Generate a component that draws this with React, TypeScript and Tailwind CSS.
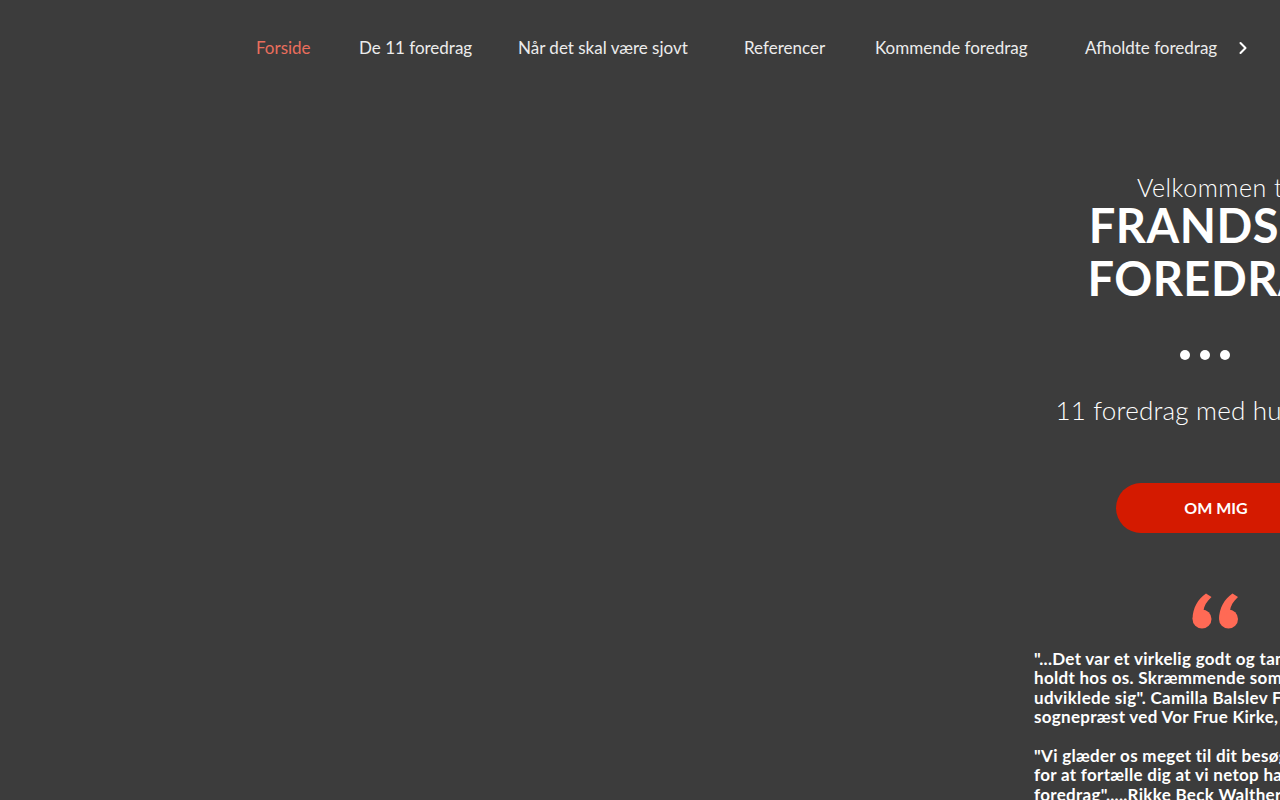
import { ChevronRight } from "lucide-react";

interface NavItem {
  text: string;
  width: string;
  active?: boolean;
}

const NavItems: NavItem[] = [
  { text: "Forside", width: "w-[103px]", active: true },
  { text: "De 11 foredrag", width: "w-[159px]" },
  { text: "Når det skal være sjovt", width: "w-[226px]" },
  { text: "Referencer", width: "w-[131px]" },
  { text: "Kommende foredrag", width: "w-[210px]" },
  { text: "Afholdte foredrag", width: "w-[148px]" },
];

const quoteLines = [
  "\"...Det var et virkelig godt og tankevækkende foredrag du",
  "holdt hos os. Skræmmende som samfundet",
  "udviklede sig\". Camilla Balslev Frederiksen,",
  "sognepræst ved Vor Frue Kirke, Aarhus",
];

const quoteLines2 = [
  "\"Vi glæder os meget til dit besøg og skriver",
  "for at fortælle dig at vi netop har booket dit",
  "foredrag\".....Rikke Beck Walther, Sognepræst",
];

function QuoteMark() {
  return (
    <svg width="48" height="36" viewBox="0 0 48 36" fill="#ff6a55">
      <circle cx="10" cy="26" r="9.5" />
      <path d="M0.6 26 C0.6 15 6 6 14 0.5 L19.5 4 C14.5 8.5 12 13 11.5 17.5 Z" />
      <circle cx="36.5" cy="26" r="9.5" />
      <path d="M27.1 26 C27.1 15 32.5 6 40.5 0.5 L46 4 C41 8.5 38.5 13 38 17.5 Z" />
    </svg>
  );
}

function NavBar() {
  return (
    <nav className="flex h-[96px] items-center pl-[256px] text-[17px]">
      {NavItems.map((item) => (
        <span
          key={item.text}
          className={
            "shrink-0 whitespace-nowrap " +
            item.width +
            (item.active ? " text-[#e96e5c]" : " text-[#ececec]")
          }
        >
          {item.text}
        </span>
      ))}
      <span className="flex items-center text-white">
        <ChevronRight size={20} strokeWidth={2.5} />
      </span>
    </nav>
  );
}

export default function App() {
  return (
    <div
      className="h-[800px] w-[1280px] overflow-hidden bg-[#3c3c3c]"
      style={{ fontFamily: "Lato, 'Open Sans', sans-serif" }}
    >
      <NavBar />
      <main className="ml-[1034px] w-[364px]">
        <div className="flex flex-col items-center text-center text-white">
          <p className="mt-[78px] whitespace-nowrap text-[25px] font-light leading-[26px] tracking-[0.5px]">
            Velkommen til
          </p>
          <h1 className="mt-[-1px] whitespace-nowrap text-[47px] font-bold leading-[53px] tracking-[0.5px]">
            FRANDSEN
            <br />
            FOREDRAG
          </h1>
          {/* slide dots sit a little left of the column centre */}
          <div className="mr-[22px] mt-[45px] flex gap-[10px]">
            <span className="h-[10px] w-[10px] rounded-full bg-white" />
            <span className="h-[10px] w-[10px] rounded-full bg-white" />
            <span className="h-[10px] w-[10px] rounded-full bg-white" />
          </div>
          <p className="mt-[35px] whitespace-nowrap text-[26px] font-light leading-[30px] tracking-[0.2px]">
            11 foredrag med humorsans
          </p>
          <button className="mt-[58px] h-[50px] w-[200px] rounded-full bg-[#d41a00] text-[16px] font-bold text-white">
            OM MIG
          </button>
          <div className="mt-[60px]">
            <QuoteMark />
          </div>
        </div>
        <div className="mt-[20px] whitespace-nowrap text-[17px] font-bold leading-[19.4px] tracking-[0.3px] text-white">
          {quoteLines.map((line) => (
            <p key={line}>{line}</p>
          ))}
          <p>&nbsp;</p>
          {quoteLines2.map((line) => (
            <p key={line}>{line}</p>
          ))}
        </div>
      </main>
    </div>
  );
}
